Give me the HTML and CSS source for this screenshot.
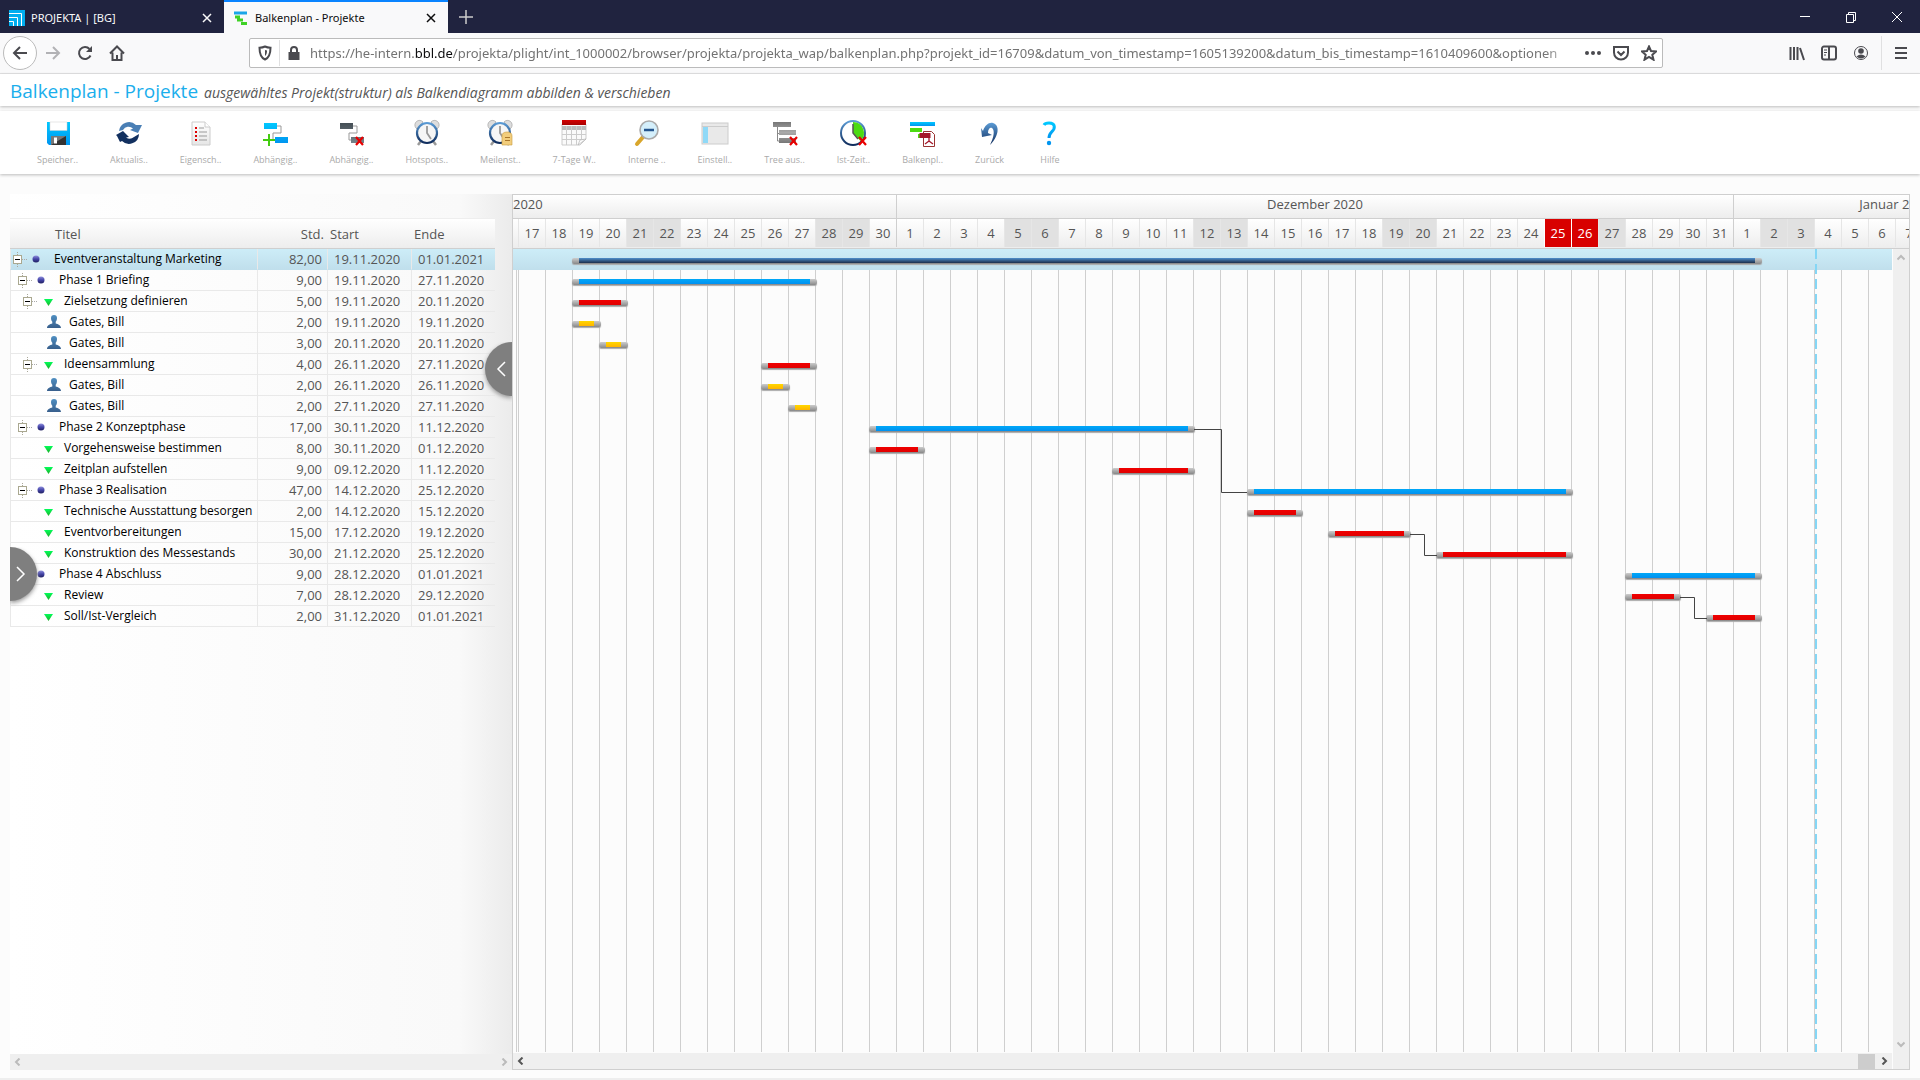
FILE: index.html
```html
<!DOCTYPE html>
<html lang="de">
<head>
    <meta charset="UTF-8">
    <meta name="viewport" content="width=device-width, initial-scale=1.0">
    <title>Balkenplan - Projekte</title>
    <link rel="stylesheet" href="styles.css">
</head>

<body>

    <!-- tabs -->
    <div class="tabbar">
        <div class="tab">
            <svg class="favicon" viewBox="0 0 16 16"><rect width="16" height="16" fill="#00aeef"/><path d="M0 3.500h12.500V16M0 7.500h8.500V16M0 11.500h4.500V16" fill="none" stroke="#fff"/></svg>
            <span class="tab-title">PROJEKTA | [BG]</span>
            <button class="tab-close" aria-label="Tab schließen"><svg viewBox="0 0 10 10"><path d="M1 1l8 8M9 1l-8 8"/></svg></button>
        </div>
        <div class="tab active">
            <svg class="favicon" viewBox="0 0 16 16"><path d="M1 3h13" stroke="#1ba5e8" stroke-width="3"/><path d="M2 7h5M4 10h6M8 13.500h6" stroke="#3fd125" stroke-width="3"/></svg>
            <span class="tab-title">Balkenplan - Projekte</span>
            <button class="tab-close" aria-label="Tab schließen"><svg viewBox="0 0 10 10"><path d="M1 1l8 8M9 1l-8 8"/></svg></button>
        </div>
        <button class="new-tab" aria-label="Neuer Tab"><svg viewBox="0 0 14 14"><path d="M7 0v14M0 7h14"/></svg></button>
        <div class="window-buttons">
            <button aria-label="Minimieren"><svg viewBox="0 0 12 12"><path d="M1 5.500h10"/></svg></button>
            <button aria-label="Verkleinern"><svg viewBox="0 0 12 12"><path d="M1.500 3.500h7v8h-7zM3.500 3.500v-2h7v8h-2"/></svg></button>
            <button aria-label="Schließen"><svg viewBox="0 0 12 12"><path d="M1 1l10 10M11 1L1 11"/></svg></button>
        </div>
    </div>

    <!-- address bar -->
    <div class="navbar">
        <button class="back" aria-label="Zurück"><svg viewBox="0 0 16 16"><path d="M15 8H2M8 2L2 8l6 6"/></svg></button>
        <button class="forward" aria-label="Vor"><svg viewBox="0 0 16 16"><path d="M1 8h13M8 2l6 6-6 6"/></svg></button>
        <button aria-label="Neu laden"><svg viewBox="0 0 16 16"><path d="M13.500 10.500A6 6 0 1 1 12.500 4"/><path d="M15 1v6H9z" fill="#4a4a4f" stroke="none"/></svg></button>
        <button aria-label="Startseite"><svg viewBox="0 0 16 16"><path d="M1 8.500L8 1.500l7 7M3.500 7.500V15h9V7.500"/><path d="M8 15v-5"/></svg></button>
        <div class="urlbar">
            <svg viewBox="0 0 16 16"><path d="M8 1.500c2 1 4 1.200 5.500 1.200C13.500 9 12.500 12.500 8 14.500 3.500 12.500 2.500 9 2.500 2.700 4 2.700 6 2.500 8 1.500z"/><path d="M8 5v6c1.500-1 2-3 2-5.500z" fill="#4a4a4f" stroke="none"/></svg>
            <span class="url-divider"></span>
            <svg viewBox="0 0 16 16"><path d="M2.500 7h11v8h-11z" fill="#4a4a4f" stroke="none"/><path d="M5 8V5a3 3 0 0 1 6 0v3"/></svg>
            <div class="url">https://he-intern.<b>bbl.de</b>/projekta/plight/int_1000002/browser/projekta/projekta_wap/balkenplan.php?projekt_id=16709&amp;datum_von_timestamp=1605139200&amp;datum_bis_timestamp=1610409600&amp;optionen</div>
            <button aria-label="Aktionen"><svg viewBox="0 0 16 16"><g fill="#4a4a4f" stroke="none"><circle cx="2" cy="8" r="2"/><circle cx="8" cy="8" r="2"/><circle cx="14" cy="8" r="2"/></g></svg></button>
            <button aria-label="Pocket"><svg viewBox="0 0 16 16"><path d="M1 2h14v5.500a7 7 0 0 1-14 0zM4.500 6.500L8 10l3.500-3.500"/></svg></button>
            <button aria-label="Lesezeichen"><svg viewBox="0 0 16 16"><path d="M8 1.500l2 4.500 5 .5-3.700 3.300 1.200 4.900L8 12l-4.500 2.700 1.200-4.900L1 6.500 6 6z"/></svg></button>
        </div>
        <div class="nav-tools">
            <button aria-label="Bibliothek"><svg viewBox="0 0 16 16"><path d="M1.500 2v13M5 2v13M8.500 2v13M11 3l4 12"/></svg></button>
            <button aria-label="Seitenleiste"><svg viewBox="0 0 16 16"><path d="M1 3.500a2 2 0 0 1 2-2h10a2 2 0 0 1 2 2v9a2 2 0 0 1-2 2H3a2 2 0 0 1-2-2zM8 2v12"/><path d="M3 5h3M3 7.500h3M3 10h2" stroke-width="1"/></svg></button>
            <button aria-label="Konto"><svg viewBox="0 0 16 16"><circle cx="8" cy="8" r="6.500" stroke-width="1"/><circle cx="8" cy="6" r="2.800" fill="#4a4a4f" stroke="none"/><path d="M3.500 11.500Q8 7.500 12.500 11.500 8 15.500 3.500 11.500z" fill="#4a4a4f" stroke="none"/></svg></button>
            <span class="nav-divider"></span>
            <button aria-label="Menü"><svg viewBox="0 0 16 16"><path d="M2 3h12M2 8h12M2 13h12"/></svg></button>
        </div>
    </div>

    <header class="page-header">
        <h1>Balkenplan - Projekte</h1>
        <i>ausgewähltes Projekt(struktur) als Balkendiagramm abbilden &amp; verschieben</i>
    </header>

    <svg class="defs" aria-hidden="true">
        <defs>
            <linearGradient id="cyan" x2="0" y2="1"><stop offset="0" stop-color="#00c8ff"/><stop offset="1" stop-color="#0095f0"/></linearGradient>
            <linearGradient id="navy" x2="0" y2="1"><stop offset="0" stop-color="#5b9bd5"/><stop offset="1" stop-color="#0f2c5c"/></linearGradient>
            <linearGradient id="grey" x2="0" y2="1"><stop offset="0" stop-color="#777"/><stop offset=".5" stop-color="#aaa"/><stop offset="1" stop-color="#777"/></linearGradient>
            <linearGradient id="dark" x2="0" y2="1"><stop offset="0" stop-color="#444e55"/><stop offset="1" stop-color="#77838a"/></linearGradient>
            <linearGradient id="paper" x2="0" y2="1"><stop offset="0" stop-color="#fff"/><stop offset="1" stop-color="#e6e6e6"/></linearGradient>
            <linearGradient id="redtop" x2="0" y2="1"><stop offset="0" stop-color="#d40000"/><stop offset="1" stop-color="#a80000"/></linearGradient>
            <linearGradient id="ball" x2="0" y2="1"><stop offset="0" stop-color="#9090dc"/><stop offset=".5" stop-color="#4444a8"/><stop offset="1" stop-color="#202060"/></linearGradient>
            <linearGradient id="leaf" x2="0" y2="1"><stop offset="0" stop-color="#00ff5a"/><stop offset="1" stop-color="#1fae2a"/></linearGradient>
            <linearGradient id="body" x2="0" y2="1"><stop offset="0" stop-color="#4f8fc2"/><stop offset="1" stop-color="#385f8c"/></linearGradient>
            <g id="clock">
                <path d="M3 9a4.500 4.500 0 0 1 7-6L4 10zM25 9a4.500 4.500 0 0 0-7-6l6 7z" fill="#ddd" stroke="#aaa" stroke-width=".8"/>
                <path d="M8 22l-3 4M20 22l3 4" stroke="#999" stroke-width="2.500"/>
                <circle cx="14" cy="14" r="10" fill="#f6f6f6" stroke="url(#navy)" stroke-width="2.200"/>
                <path d="M14 7v7l4 6" fill="none" stroke="#999" stroke-width="1.800"/>
            </g>
            <path id="cross" d="M17 18l7 8M24 18l-7 8" stroke="#e80000" stroke-width="2.200"/>
            <g id="minus"><path d="M4.500 3v3M4.500 15v4" stroke="#aaa89a" stroke-dasharray="1 1"/><path d="M9 10.500h6" stroke="#aaa" stroke-dasharray="1 1"/><rect x=".5" y="6.500" width="8" height="8" fill="#fff" stroke="#aaa890"/><path d="M2 10.500h5" stroke="#000"/></g>
            <circle id="dot" cx="7" cy="10" r="3.500" fill="url(#ball)"/>
            <path id="task" d="M5 8h9l-4.500 7z" fill="url(#leaf)"/>
            <path id="person" d="M10 3c2 0 3 1 3 3 0 1.500-.5 3-1.300 3.800v1.700c2.300.7 5.300 1.500 5.300 4.500H3c0-3 3-3.800 5.300-4.500V9.800C7.500 9 7 7.500 7 6c0-2 1-3 3-3z" fill="url(#body)"/>
        </defs>
    </svg>

    <nav class="toolbar">
        <button><svg viewBox="0 0 28 28"><path d="M3 3h23v23H5l-2-2z" fill="url(#cyan)"/><path d="M6 3h17v8.500H6z" fill="#fff" stroke="#ccc" stroke-width=".5"/><path d="M7 17h15v9H7z" fill="#333"/><path d="M7 17h15L7 26z" fill="#777"/><path d="M10 18.500h3v6h-3z" fill="#fff"/></svg>Speicher..</button>
        <button><svg viewBox="0 0 28 28"><path d="M4 12A10 10 0 0 1 21 6l3 0 3 0-4 8-8-3 3-1.500A6.500 6.500 0 0 0 8 11z" fill="#4a7fb5"/><path d="M24 15A10 10 0 0 1 7 22l-2 1-3-6-1-1 7-4 6 6-3 .5A6.500 6.500 0 0 0 19 18z" fill="#12305f"/></svg>Aktualis..</button>
        <button><svg viewBox="0 0 28 28"><path d="M5 3h13l5 5v18H5z" fill="url(#paper)" stroke="#ccc"/><path d="M18 3v5h5" fill="#fff" stroke="#ccc"/><path d="M8 9h2M8 13h2M8 17h2M8 21h2" stroke="#d00" stroke-width="2"/><path d="M12 9h5M12 13h8M12 17h8M12 21h8" stroke="#999"/></svg>Eigensch..</button>
        <button><svg viewBox="0 0 28 28"><path d="M15 7h5v7h-8v7h3" fill="none" stroke="#999"/><path d="M3 4h13v6H3zM14 18h13v6H14z" fill="url(#cyan)"/><path d="M8 15v12M2 21h12" stroke="#4c1" stroke-width="2"/></svg>Abhängig..</button>
        <button><svg viewBox="0 0 28 28"><path d="M15 7h5v7h-8v7h3" fill="none" stroke="#999"/><path d="M3 4h13v6H3zM14 18h13v6H14z" fill="url(#dark)"/><use href="#cross" x="2"/></svg>Abhängig..</button>
        <button><svg viewBox="0 0 28 28"><use href="#clock"/></svg>Hotspots..</button>
        <button><svg viewBox="0 0 28 28"><use href="#clock"/><path d="M16 26V17q0-4 5-4t5 4v9z" fill="#f2cd7c" stroke="#c79b3e" stroke-width=".6"/><path d="M19 18.500h5M19 21.500h5" stroke="#a8762a"/></svg>Meilenst..</button>
        <button><svg viewBox="0 0 28 28"><path d="M2 5h24v15l-6 6H2z" fill="#fafafa" stroke="#ccc"/><path d="M2 7h24v4H2z" fill="#bbb"/><path d="M2 15.500h24M2 20.500h22M6.500 7v19M11.500 7v19M16.500 7v19M21.500 7v15" stroke="#ccc" fill="none"/><path d="M18 26l2-5 6-1z" fill="#fff" stroke="#aaa" stroke-width=".6"/><path d="M2 1h24v5H2z" fill="url(#redtop)"/></svg>7-Tage W..</button>
        <button><svg viewBox="0 0 28 28"><path d="M4 25l6-7" stroke="#d9a62b" stroke-width="4" stroke-linecap="round"/><circle cx="16" cy="11" r="9" fill="#d4effb" stroke="#aaa" stroke-width="1.600"/><path d="M11 11h10" stroke="#24558f" stroke-width="2.500"/></svg>Interne ..</button>
        <button><svg viewBox="0 0 28 28"><rect x="1" y="4" width="26" height="21" fill="#e9e9e9" stroke="#ccc"/><path d="M1 7.500h26" stroke="#ccc"/><path d="M2 8h5v16H2z" fill="#8fd9f7"/></svg>Einstell..</button>
        <button><svg viewBox="0 0 28 28"><path d="M6.500 8v14H9M6.500 14.500H9" fill="none" stroke="#888"/><path d="M2 3h18v5H2zM8 11h17v5H8zM8 19h17v5H8z" fill="url(#grey)"/><use href="#cross" x="2"/></svg>Tree aus..</button>
        <button><svg viewBox="0 0 28 28"><circle cx="14" cy="14" r="12" fill="#fff" stroke="url(#navy)" stroke-width="2"/><path d="M14 14V3a11 11 0 0 1 7.500 19z" fill="#4cdb12"/><path d="M14 5v9l5 6" fill="none" stroke="#555" stroke-width="1.500"/><use href="#cross" x="3"/></svg>Ist-Zeit..</button>
        <button><svg viewBox="0 0 28 28"><path d="M1 3h25v4H1z" fill="url(#cyan)"/><path d="M1 9h12v4H1zM9 15h9v4H9z" fill="#4cdb12"/><path d="M14.500 12.500h8l3 3v12h-11z" fill="#fff" stroke="#933"/><path d="M10.500 14h11v5h-11z" fill="#a5182b"/><path d="M16 25l4-3 4 3M20 18v4" fill="none" stroke="#a5182b" stroke-width="1.300"/></svg>Balkenpl..</button>
        <button><svg viewBox="0 0 28 28"><path d="M5 9l2 3C9 6 13 3 17 4c7 2 6 13-3 22 4-8 5-15 2-17-2-1-4 1-4 5l4 2-10 2z" fill="url(#navy)"/></svg>Zurück</button>
        <button><svg viewBox="0 0 28 28"><path d="M8 6Q9 4 13 4c7 0 6 6 3 8.500-2 2-3 3-3 6.500" fill="none" stroke="url(#cyan)" stroke-width="3"/><circle cx="13" cy="24" r="2.200" fill="#0095f0"/></svg>Hilfe</button>
    </nav>

    <main class="plan">

        <!-- project tree -->
        <section class="tree-panel">
            <div class="tree-scroll">
                <table class="tree">
                    <colgroup><col class="col-title"><col class="col-hours"><col class="col-start"><col class="col-end"></colgroup>
                    <thead>
                        <tr><th>Titel</th><th>Std.</th><th>Start</th><th>Ende</th></tr>
                    </thead>
                    <tbody>
                        <tr class="selected"><td class="lv1"><svg><use href="#minus"/></svg><svg><use href="#dot"/></svg>Eventveranstaltung Marketing</td><td>82,00</td><td>19.11.2020</td><td>01.01.2021</td></tr>
                        <tr><td class="lv2"><svg><use href="#minus"/></svg><svg><use href="#dot"/></svg>Phase 1 Briefing</td><td>9,00</td><td>19.11.2020</td><td>27.11.2020</td></tr>
                        <tr><td class="lv3"><svg><use href="#minus"/></svg><svg><use href="#task"/></svg>Zielsetzung definieren</td><td>5,00</td><td>19.11.2020</td><td>20.11.2020</td></tr>
                        <tr><td class="lv4"><svg></svg><svg><use href="#person"/></svg>Gates, Bill</td><td>2,00</td><td>19.11.2020</td><td>19.11.2020</td></tr>
                        <tr><td class="lv4"><svg></svg><svg><use href="#person"/></svg>Gates, Bill</td><td>3,00</td><td>20.11.2020</td><td>20.11.2020</td></tr>
                        <tr><td class="lv3"><svg><use href="#minus"/></svg><svg><use href="#task"/></svg>Ideensammlung</td><td>4,00</td><td>26.11.2020</td><td>27.11.2020</td></tr>
                        <tr><td class="lv4"><svg></svg><svg><use href="#person"/></svg>Gates, Bill</td><td>2,00</td><td>26.11.2020</td><td>26.11.2020</td></tr>
                        <tr><td class="lv4"><svg></svg><svg><use href="#person"/></svg>Gates, Bill</td><td>2,00</td><td>27.11.2020</td><td>27.11.2020</td></tr>
                        <tr><td class="lv2"><svg><use href="#minus"/></svg><svg><use href="#dot"/></svg>Phase 2 Konzeptphase</td><td>17,00</td><td>30.11.2020</td><td>11.12.2020</td></tr>
                        <tr><td class="lv3"><svg></svg><svg><use href="#task"/></svg>Vorgehensweise bestimmen</td><td>8,00</td><td>30.11.2020</td><td>01.12.2020</td></tr>
                        <tr><td class="lv3"><svg></svg><svg><use href="#task"/></svg>Zeitplan aufstellen</td><td>9,00</td><td>09.12.2020</td><td>11.12.2020</td></tr>
                        <tr><td class="lv2"><svg><use href="#minus"/></svg><svg><use href="#dot"/></svg>Phase 3 Realisation</td><td>47,00</td><td>14.12.2020</td><td>25.12.2020</td></tr>
                        <tr><td class="lv3"><svg></svg><svg><use href="#task"/></svg>Technische Ausstattung besorgen</td><td>2,00</td><td>14.12.2020</td><td>15.12.2020</td></tr>
                        <tr><td class="lv3"><svg></svg><svg><use href="#task"/></svg>Eventvorbereitungen</td><td>15,00</td><td>17.12.2020</td><td>19.12.2020</td></tr>
                        <tr><td class="lv3"><svg></svg><svg><use href="#task"/></svg>Konstruktion des Messestands</td><td>30,00</td><td>21.12.2020</td><td>25.12.2020</td></tr>
                        <tr><td class="lv2"><svg><use href="#minus"/></svg><svg><use href="#dot"/></svg>Phase 4 Abschluss</td><td>9,00</td><td>28.12.2020</td><td>01.01.2021</td></tr>
                        <tr><td class="lv3"><svg></svg><svg><use href="#task"/></svg>Review</td><td>7,00</td><td>28.12.2020</td><td>29.12.2020</td></tr>
                        <tr><td class="lv3"><svg></svg><svg><use href="#task"/></svg>Soll/Ist-Vergleich</td><td>2,00</td><td>31.12.2020</td><td>01.01.2021</td></tr>
                    </tbody>
                </table>
            </div>
            <div class="scrollbar disabled">
                <svg viewBox="0 0 8 8"><path d="M5.500 0.500L2 4l3.500 3.500"/></svg>
                <svg viewBox="0 0 8 8"><path d="M2.500 0.500L6 4 2.500 7.500"/></svg>
            </div>
            <button class="handle handle-left" aria-label="Menü einblenden"><svg viewBox="0 0 10 16"><path d="M1 1l7 7-7 7"/></svg></button>
            <button class="handle handle-right" aria-label="Baum ausblenden"><svg viewBox="0 0 10 16"><path d="M9 1L2 8l7 7"/></svg></button>
        </section>

        <!-- bar chart -->
        <section class="chart">
            <div class="months">
                <div class="nov">2020</div>
                <div class="dez">Dezember 2020</div>
                <div class="jan">Januar 2021</div>
            </div>
            <div class="days">
                <span>17</span><span>18</span><span>19</span><span>20</span><span class="free">21</span><span class="free">22</span><span>23</span><span>24</span><span>25</span><span>26</span><span>27</span><span class="free">28</span><span class="free">29</span><span>30</span>
                <span class="first">1</span><span>2</span><span>3</span><span>4</span><span class="free">5</span><span class="free">6</span><span>7</span><span>8</span><span>9</span><span>10</span><span>11</span><span class="free">12</span><span class="free">13</span><span>14</span><span>15</span><span>16</span><span>17</span><span>18</span><span class="free">19</span><span class="free">20</span><span>21</span><span>22</span><span>23</span><span>24</span><span class="holiday">25</span><span class="holiday">26</span><span class="free">27</span><span>28</span><span>29</span><span>30</span><span>31</span>
                <span class="first">1</span><span class="free">2</span><span class="free">3</span><span>4</span><span>5</span><span>6</span><span>7</span>
            </div>
            <div class="chart-body">
                <div class="chart-main">
                    <div class="rows">
                        <div class="row selected"><div class="bar project" style="--start: 2; --days: 44"></div></div>
                        <div class="row"><div class="bar phase" style="--start: 2; --days: 9"></div></div>
                        <div class="row"><div class="bar step" style="--start: 2; --days: 2"></div></div>
                        <div class="row"><div class="bar staff" style="--start: 2; --days: 1"></div></div>
                        <div class="row"><div class="bar staff" style="--start: 3; --days: 1"></div></div>
                        <div class="row"><div class="bar step" style="--start: 9; --days: 2"></div></div>
                        <div class="row"><div class="bar staff" style="--start: 9; --days: 1"></div></div>
                        <div class="row"><div class="bar staff" style="--start: 10; --days: 1"></div></div>
                        <div class="row"><div class="bar phase" style="--start: 13; --days: 12"></div></div>
                        <div class="row"><div class="bar step" style="--start: 13; --days: 2"></div></div>
                        <div class="row"><div class="bar step" style="--start: 22; --days: 3"></div></div>
                        <div class="row"><div class="bar phase" style="--start: 27; --days: 12"></div></div>
                        <div class="row"><div class="bar step" style="--start: 27; --days: 2"></div></div>
                        <div class="row"><div class="bar step" style="--start: 30; --days: 3"></div></div>
                        <div class="row"><div class="bar step" style="--start: 34; --days: 5"></div></div>
                        <div class="row"><div class="bar phase" style="--start: 41; --days: 5"></div></div>
                        <div class="row"><div class="bar step" style="--start: 41; --days: 2"></div></div>
                        <div class="row"><div class="bar step" style="--start: 44; --days: 2"></div></div>
                        <svg class="links" width="1379" height="400"><path d="M681 180.500h27.500v63H734M897 285.500h14.500v21H924M1167 348.500h14.500v21H1194"/></svg>
                        <div class="today"></div>
                    </div>
                    <div class="scrollbar">
                        <svg viewBox="0 0 8 8"><path d="M5.500 0.500L2 4l3.500 3.500"/></svg>
                        <span class="thumb"></span>
                        <svg viewBox="0 0 8 8"><path d="M2.500 0.500L6 4 2.500 7.500"/></svg>
                    </div>
                </div>
                <div class="scrollbar vertical disabled">
                    <svg viewBox="0 0 8 8"><path d="M0.500 5.500L4 2l3.500 3.500"/></svg>
                    <svg viewBox="0 0 8 8"><path d="M0.500 2.500L4 6l3.500-3.500"/></svg>
                </div>
            </div>
        </section>
    </main>

    <div class="status-line"></div>

</body>
</html>
```

FILE: styles.css
```css
* {
    box-sizing: border-box;
}

body {
    margin: 0;
    height: 100vh;
    display: flex;
    flex-direction: column;
    overflow: hidden;
    background: #fcfcfc;
    color: #555;
    font-family: "Open Sans", "Noto Sans", sans-serif;
    font-size: 13px;
}

button {
    margin: 0;
    padding: 0;
    border: none;
    background: none;
    color: inherit;
    font: inherit;
    cursor: pointer;
}

svg {
    display: block;
    flex: none;
}

.defs {
    position: absolute;
    width: 0;
    height: 0;
}

/* tabs */
.tabbar {
    display: flex;
    flex: none;
    height: 33px;
    background: #20233f;
    color: #f9f9fa;
    font-family: "Noto Sans", sans-serif;
    font-size: 11px;
}

.tab {
    display: flex;
    align-items: center;
    width: 224px;
    padding: 2px 12px 0 9px;
}

.tab.active {
    padding-top: 0;
    border-top: 2px solid #0a84ff;
    background: #f9f9fa;
    color: #0c0c0d;
}

.favicon {
    width: 16px;
    height: 16px;
}

.tab-title {
    flex: 1;
    margin-left: 6px;
}

.tab-close svg {
    width: 10px;
    height: 10px;
    stroke: currentColor;
    stroke-width: 1.5;
}

.new-tab {
    margin-left: 11px;
}

.new-tab svg {
    width: 14px;
    height: 14px;
    stroke: #ccc;
    stroke-width: 1.5;
}

.window-buttons {
    display: flex;
    margin-left: auto;
}

.window-buttons button {
    width: 46px;
    padding-left: 17px;
}

.window-buttons svg {
    width: 12px;
    height: 12px;
    fill: none;
    stroke: #fff;
    stroke-width: 1;
}

/* address bar */
.navbar {
    display: flex;
    align-items: center;
    flex: none;
    height: 41px;
    padding: 0 11px 1px 3px;
    border-bottom: 1px solid #e0e0e1;
    background: #f9f9fa;
}

.navbar svg {
    width: 16px;
    height: 16px;
    fill: none;
    stroke: #4a4a4f;
    stroke-width: 2;
}

.navbar .back {
    padding: 8px;
    border: 1px solid #bbb;
    border-radius: 50%;
    background: #fff;
}

.navbar .forward {
    margin: 0 16px 0 8px;
    opacity: 0.4;
}

.navbar .forward + button {
    margin-right: 16px;
}

.urlbar {
    display: flex;
    align-items: center;
    flex: 1;
    height: 30px;
    margin-left: 124px;
    padding: 0 5px 0 7px;
    border: 1px solid #bbb;
    border-radius: 2px;
    background: #fff;
}

.url-divider {
    width: 1px;
    height: 26px;
    margin: 0 6px;
    background: #e0e0e1;
}

.url {
    flex: 1;
    width: 0;
    margin: 0 8px;
    overflow: hidden;
    color: #737373;
    font-family: "Noto Sans", sans-serif;
    font-size: 13px;
    white-space: nowrap;
    -webkit-mask-image: linear-gradient(to left, transparent, #000 32px);
    mask-image: linear-gradient(to left, transparent, #000 32px);
}

.url b {
    color: #0c0c0d;
    font-weight: normal;
}

.urlbar button + button {
    margin-left: 12px;
}

.nav-tools {
    display: flex;
    align-items: center;
    gap: 16px;
    margin-left: 126px;
}

.nav-divider {
    width: 1px;
    height: 34px;
    margin-left: -4px;
    margin-right: -5px;
    background: #e0e0e1;
}

/* page title */
.page-header {
    display: flex;
    align-items: baseline;
    flex: none;
    gap: 6px;
    height: 32px;
    padding: 4px 10px 0;
    background: #fff;
    box-shadow: 0 1px 3px #bbb;
}

.page-header h1 {
    margin: 0;
    color: #1aaeec;
    font-size: 19px;
    font-weight: normal;
}

.page-header i {
    font-size: 14px;
}

/* toolbar */
.toolbar {
    display: flex;
    flex: none;
    gap: 32px;
    height: 63px;
    margin-top: 5px;
    padding: 8px 37px 0;
    background: #fff;
    box-shadow: 0 1px 3px #bbb;
}

.toolbar button {
    display: flex;
    flex-direction: column;
    align-items: center;
    gap: 7px;
    color: #aaa;
    font-size: 9px;
    line-height: 12px;
}

.toolbar svg {
    width: 28px;
    height: 28px;
}

/* plan */
.plan {
    display: flex;
    flex: 1;
    min-height: 0;
    padding: 20px 10px 8px;
}

.tree-panel {
    position: relative;
    display: flex;
    flex-direction: column;
    flex: none;
    width: 502px;
    background: linear-gradient(to right, #fff, #f9f9f9 450px, #ebebeb);
}

.tree-scroll {
    flex: 1;
    min-height: 0;
    padding-top: 24px;
}

.tree {
    width: 485px;
    border-collapse: separate;
    border-spacing: 0;
    table-layout: fixed;
}

.col-title {
    width: 248px;
}

.col-hours {
    width: 70px;
}

.col-start {
    width: 84px;
}

.tree th {
    height: 31px;
    padding: 0;
    border-top: 1px solid #eee;
    border-bottom: 1px solid #cfcfcf;
    background: linear-gradient(#fff, #ededed);
    font-weight: normal;
    text-align: left;
}

.tree th:first-child {
    padding-left: 45px;
}

.tree th:nth-child(2) {
    padding-right: 4px;
    text-align: right;
}

.tree th:nth-child(3),
.tree th:nth-child(4) {
    padding-left: 2px;
}

.tree td {
    height: 21px;
    padding: 0 0 0 6px;
    border-right: 1px solid #e9e9e9;
    border-bottom: 1px solid #e9e9e9;
    line-height: 20px;
    white-space: nowrap;
}

.tree td:first-child {
    display: flex;
    border-left: 1px solid #e9e9e9;
    color: #000;
    font-size: 12px;
}

.tree td:nth-child(2) {
    padding-right: 5px;
    text-align: right;
}

.tree td:last-child {
    border-right: none;
}

.tree td svg {
    width: 16px;
    height: 21px;
    overflow: visible;
}

.tree td svg + svg {
    width: 25px;
}

.tree td.lv1 {
    padding-left: 2px;
}

.tree td.lv2 {
    padding-left: 7px;
}

.tree td.lv3 {
    padding-left: 12px;
}

.tree td.lv4 {
    padding-left: 17px;
}

.selected,
.tree .selected td {
    background: linear-gradient(#cdedf8, #c0dfec);
}

.tree .selected td {
    border-bottom-color: #c0dfec;
}

.handle {
    position: absolute;
    width: 27px;
    height: 54px;
    background: #7f7f7f;
    box-shadow: 0 2px 4px #999;
}

.handle svg {
    width: 10px;
    height: 16px;
    fill: none;
    stroke: #fff;
    stroke-width: 1.5;
}

.handle-left {
    top: 353px;
    left: 0;
    padding-left: 6px;
    border-radius: 0 27px 27px 0;
    clip-path: inset(0 -6px -6px 0);
}

.handle-right {
    top: 148px;
    right: 0;
    padding-left: 11px;
    border-radius: 27px 0 0 27px;
    clip-path: inset(0 0 -6px -6px);
}

/* scrollbars */
.scrollbar {
    display: flex;
    align-items: center;
    justify-content: space-between;
    flex: none;
    height: 16px;
    padding: 0 4px;
    background: #efefef;
}

.scrollbar svg {
    width: 8px;
    height: 8px;
    fill: none;
    stroke: #555;
    stroke-width: 2;
}

.scrollbar.disabled svg {
    stroke: #bbb;
}

.scrollbar.vertical {
    flex-direction: column;
    width: 16px;
    height: auto;
    margin-left: 1px;
    padding: 5px 0 21px;
}

.thumb {
    width: 17px;
    height: 15px;
    margin-left: auto;
    margin-right: 5px;
    background: #cdcdcd;
}

/* chart */
.chart {
    display: flex;
    flex-direction: column;
    flex: 1;
    min-width: 0;
    border: 1px solid #cfcfcf;
}

.months,
.days {
    display: flex;
    flex: none;
    overflow: hidden;
    border-bottom: 1px solid #cfcfcf;
    background: linear-gradient(#fff, #ededed);
    text-align: center;
}

.months {
    height: 24px;
    line-height: 18px;
}

.months div {
    flex: none;
    border-left: 1px solid #cfcfcf;
}

.months .nov {
    width: 383px;
    border-left: none;
    text-align: left;
}

.months .dez {
    width: 837px;
}

.months .jan {
    width: 324px;
}

.days {
    height: 30px;
    padding: 0 0 1px 5px;
    line-height: 28px;
}

.days span {
    flex: none;
    width: 27px;
    border-left: 1px solid #e6e6e6;
}

.days .first {
    border-color: #cfcfcf;
}

.days .free {
    background: #e1e1e1;
}

.days .holiday {
    border-color: #fff;
    background: #d80000;
    color: #fff;
}

.chart-body {
    display: flex;
    flex: 1;
    min-height: 0;
}

.chart-main {
    display: flex;
    flex-direction: column;
    flex: 1;
    min-width: 0;
}

.rows {
    position: relative;
    flex: 1;
    margin-bottom: 1px;
    overflow: hidden;
    background: repeating-linear-gradient(to right, #cfcfcf 0 1px, transparent 1px 27px) 5px 0;
}

.row {
    display: flex;
    height: 21px;
    padding-top: 9px;
}

.bar {
    flex: none;
    width: calc(var(--days) * 27px + 2px);
    height: 6px;
    margin-left: calc(var(--start) * 27px + 5px);
    padding: 0 7px 1px;
    border-radius: 2px;
    background: linear-gradient(#ccc, #888);
    box-shadow: 0 1px 1px #aaa;
}

.bar::before {
    content: "";
    display: block;
    height: 5px;
}

.project::before {
    background: linear-gradient(#4f8fcc, #1d2f4c);
}

.phase::before {
    background: linear-gradient(#00a8f8, #0090f0);
}

.step::before {
    background: linear-gradient(#f00000, #e00000);
}

.staff::before {
    background: linear-gradient(#ffd800, #ffb400);
}

.links {
    position: absolute;
    top: 0;
    left: 0;
    fill: none;
    stroke: #444;
}

.today {
    position: absolute;
    top: 0;
    bottom: 0;
    left: 1302px;
    width: 2px;
    background: repeating-linear-gradient(#85d6f5 0 10px, transparent 10px 15px);
}

.status-line {
    flex: none;
    height: 2px;
    background: #eee;
}
```
